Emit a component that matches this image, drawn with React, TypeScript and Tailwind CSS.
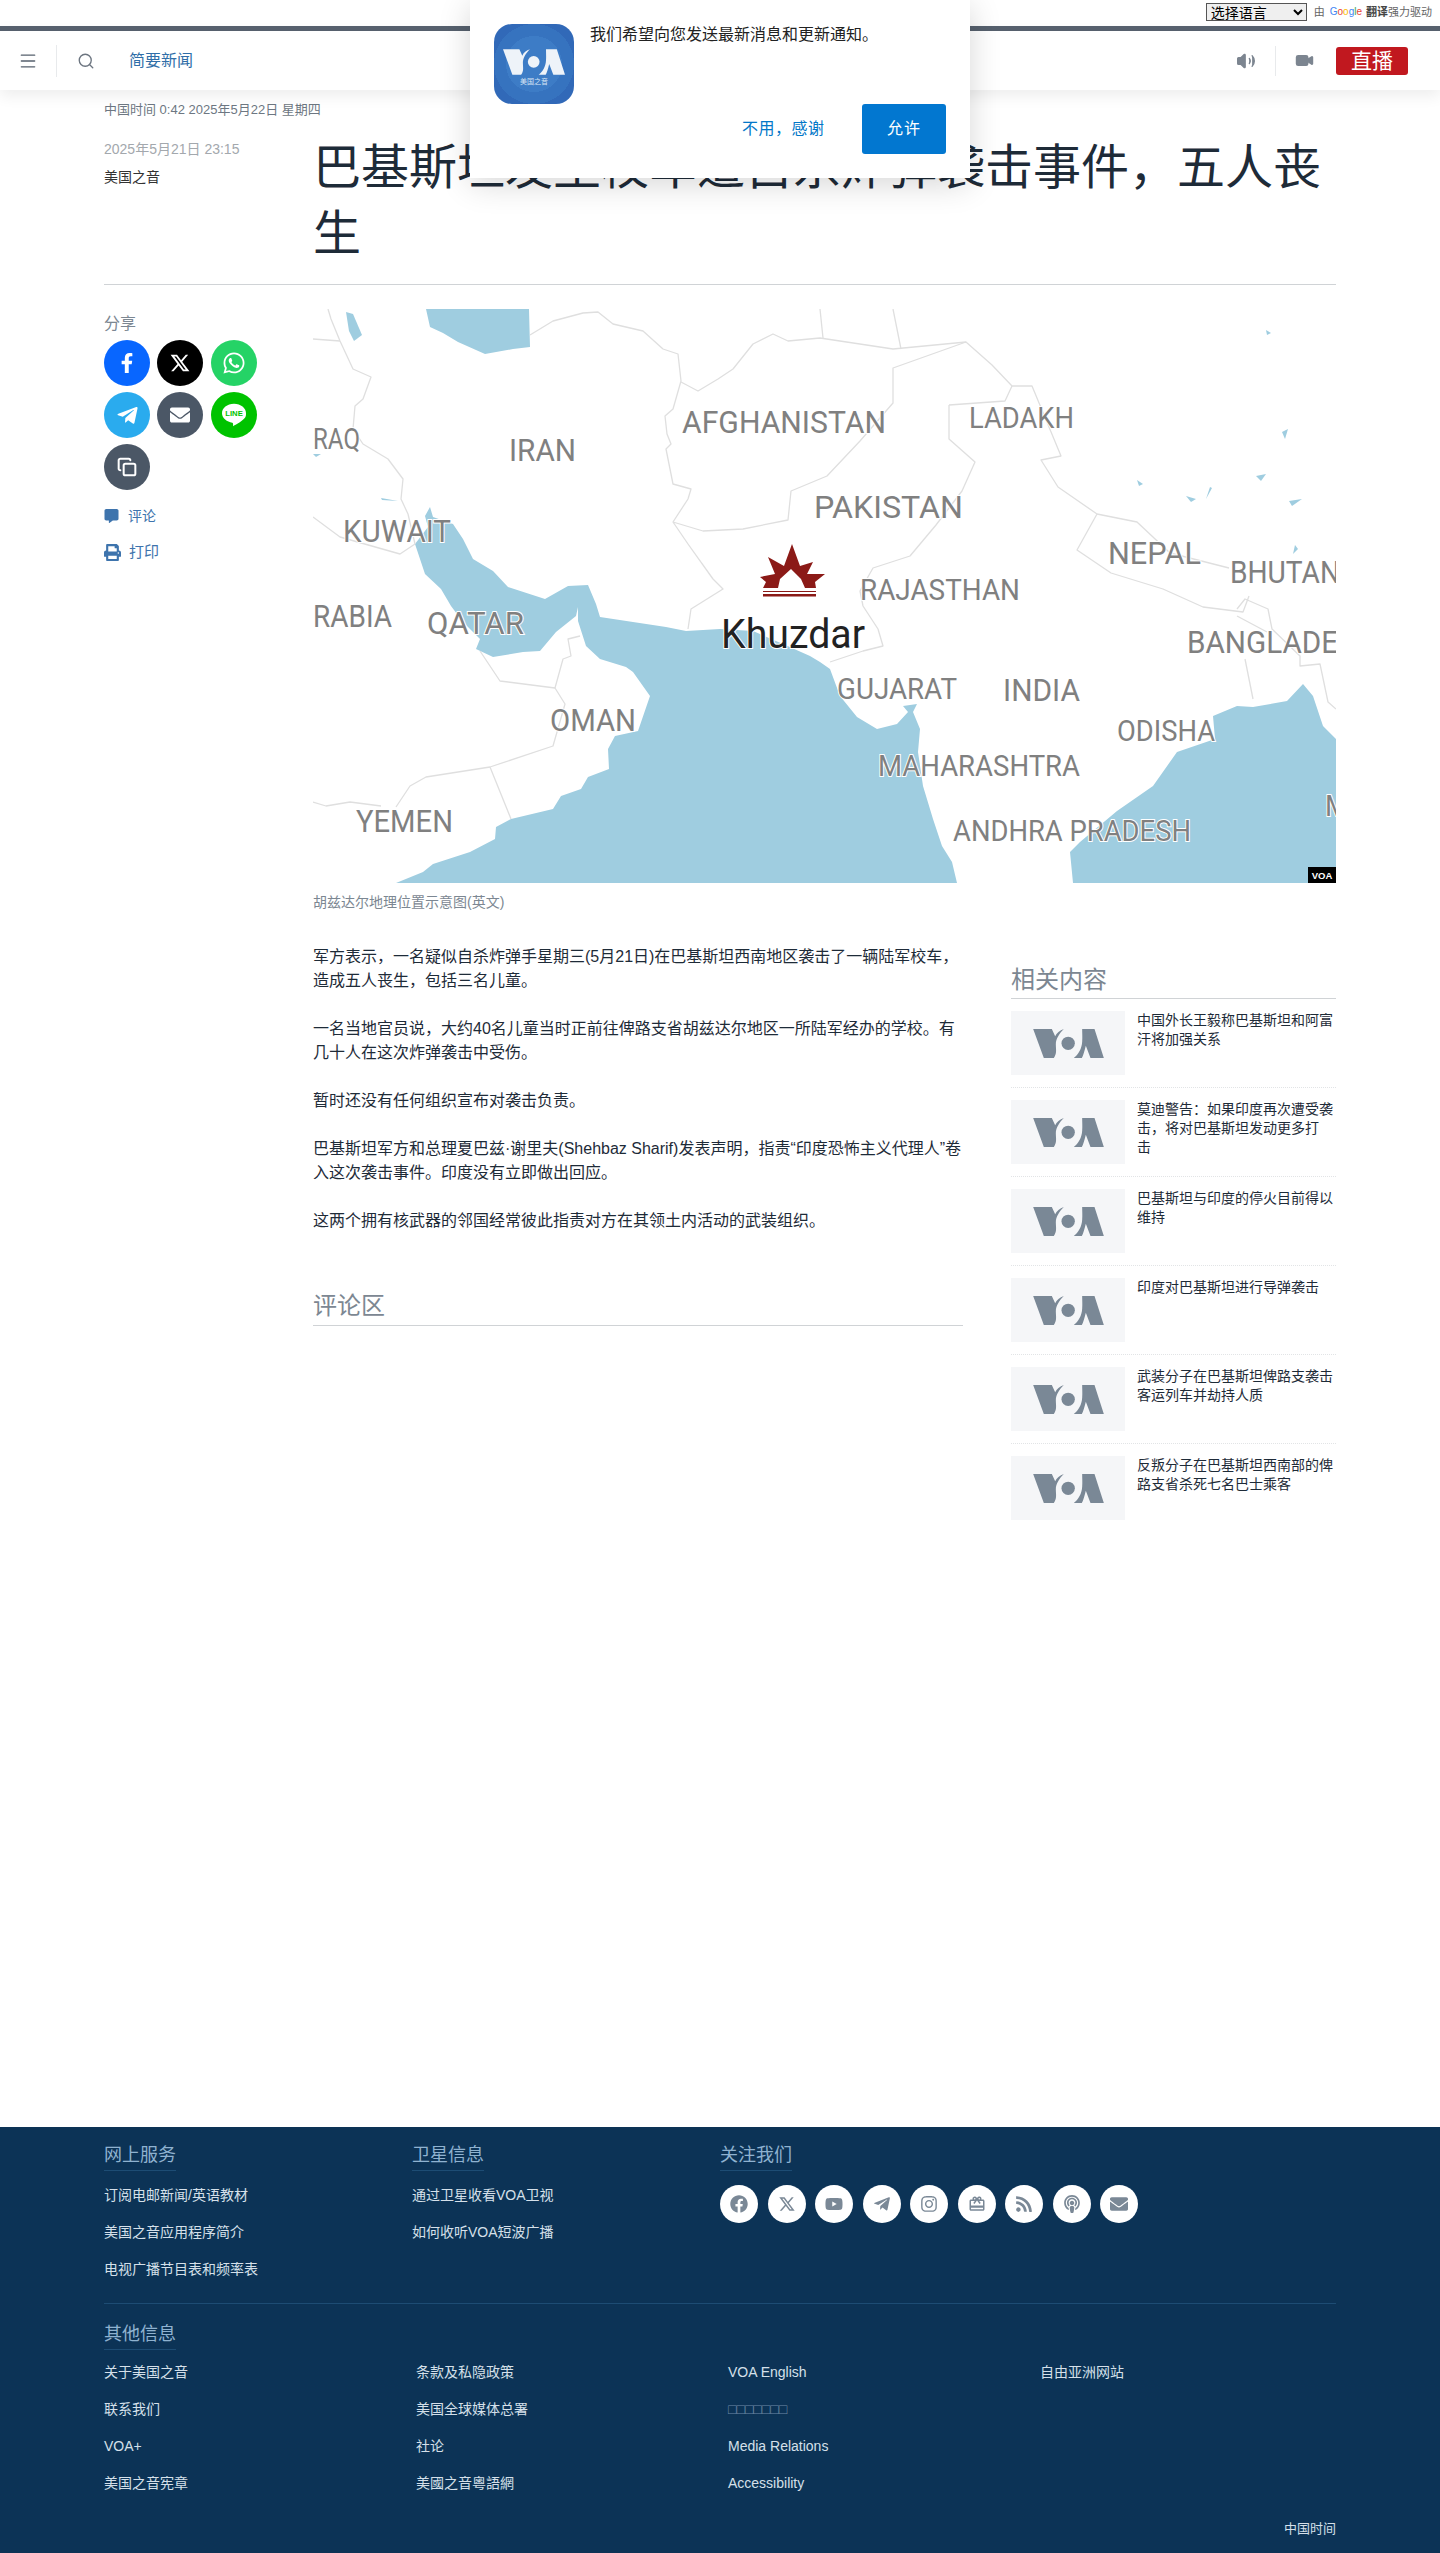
import { Menu, Search, Volume2, Video, Copy } from 'lucide-react'
import { FaFacebook, FaFacebookF, FaWhatsapp, FaTelegramPlane, FaEnvelope, FaYoutube, FaInstagram, FaRss, FaPodcast, FaCommentAlt, FaPrint } from 'react-icons/fa'
import { RiTwitterXLine } from 'react-icons/ri'
import { MdOutlineCardGiftcard } from 'react-icons/md'

const related = [
  '中国外长王毅称巴基斯坦和阿富汗将加强关系',
  '莫迪警告：如果印度再次遭受袭击，将对巴基斯坦发动更多打\n击',
  '巴基斯坦与印度的停火目前得以维持',
  '印度对巴基斯坦进行导弹袭击',
  '武装分子在巴基斯坦俾路支袭击客运列车并劫持人质',
  '反叛分子在巴基斯坦西南部的俾路支省杀死七名巴士乘客',
]

const paragraphs = [
  '军方表示，一名疑似自杀炸弹手星期三(5月21日)在巴基斯坦西南地区袭击了一辆陆军校车，造成五人丧生，包括三名儿童。',
  '一名当地官员说，大约40名儿童当时正前往俾路支省胡兹达尔地区一所陆军经办的学校。有几十人在这次炸弹袭击中受伤。',
  '暂时还没有任何组织宣布对袭击负责。',
  '巴基斯坦军方和总理夏巴兹·谢里夫(Shehbaz Sharif)发表声明，指责“印度恐怖主义代理人”卷入这次袭击事件。印度没有立即做出回应。',
  '这两个拥有核武器的邻国经常彼此指责对方在其领土内活动的武装组织。',
]

const mapLabels = [
  { t: 'AFGHANISTAN', x: 369, y: 124, w: 204, fs: 31 },
  { t: 'LADAKH', x: 656, y: 119, w: 105, fs: 30 },
  { t: 'IRAN', x: 196, y: 152, w: 67, fs: 31 },
  { t: 'RAQ', x: 0, y: 140, w: 47, fs: 30 },
  { t: 'PAKISTAN', x: 501, y: 209, w: 149, fs: 31 },
  { t: 'KUWAIT', x: 30, y: 233, w: 108, fs: 31 },
  { t: 'NEPAL', x: 795, y: 255, w: 93, fs: 31 },
  { t: 'BHUTAN', x: 917, y: 274, w: 110, fs: 31 },
  { t: 'RAJASTHAN', x: 547, y: 291, w: 160, fs: 29 },
  { t: 'RABIA', x: 0, y: 318, w: 79, fs: 31 },
  { t: 'QATAR', x: 114, y: 325, w: 97, fs: 31 },
  { t: 'BANGLADESH', x: 874, y: 344, w: 190, fs: 31 },
  { t: 'GUJARAT', x: 524, y: 390, w: 120, fs: 29 },
  { t: 'INDIA', x: 690, y: 392, w: 77, fs: 31 },
  { t: 'OMAN', x: 237, y: 422, w: 86, fs: 31 },
  { t: 'ODISHA', x: 804, y: 432, w: 98, fs: 29 },
  { t: 'MAHARASHTRA', x: 565, y: 467, w: 202, fs: 29 },
  { t: 'YEMEN', x: 43, y: 523, w: 97, fs: 31 },
  { t: 'ANDHRA PRADESH', x: 640, y: 532, w: 238, fs: 29 },
  { t: 'M', x: 1012, y: 507, w: 24, fs: 30 },
]

const seaAreas = [
  // Caspian
  '113,0 216,0 217,38 200,40 172,45 145,33 130,24 117,18',
  // Persian Gulf and Arabian Sea
  '117,198 120,208 140,215 150,230 160,250 180,262 195,278 232,290 255,277 275,276 283,295 287,308 320,313 353,318 373,322 407,320 440,322 470,335 497,347 507,353 517,360 527,387 544,408 564,420 584,415 595,403 590,397 604,395 600,403 607,420 605,443 610,477 620,510 629,537 639,553 644,574 83,574 110,563 120,555 157,543 182,530 183,518 198,510 240,500 248,487 268,480 275,468 296,460 295,440 302,427 325,422 337,387 320,363 313,358 287,350 273,337 265,312 265,298 263,307 243,323 227,342 210,343 180,348 163,340 167,330 150,313 138,297 128,280 112,265 102,235 115,218 112,207',
  // Bay of Bengal
  '760,574 757,543 767,533 804,502 840,477 864,443 902,430 900,407 924,397 940,398 974,392 990,375 1000,387 1010,417 1023,430 1023,574',
  // lakes
  '33,3 40,5 49,26 41,32 36,22',
  '68,189 85,192 69,191',
  '0,145 8,145 3,148',
  '943,167 953,165 948,172',
  '873,187 883,190 878,193',
  '976,192 989,190 979,197',
  '897,178 899,179 893,190',
  '824,171 830,175 826,177',
  '969,123 975,120 972,130',
  '982,236 985,240 980,245',
  '953,21 958,24 954,26',
]

const borders = [
  '217,26 240,12 270,4 285,3 300,15 330,22 350,40 365,45 368,72 360,100 352,107 354,125 358,135 353,140 360,175 378,180 375,190 360,213 375,235 400,270 410,280 378,300 375,320',
  '360,213 390,222 430,220 475,211 478,182 514,167 547,132 580,94 580,59 653,33',
  '368,73 385,82 405,70 420,60 440,35 460,25 475,32 507,29 580,40 653,33 679,56 699,77 719,77 748,147 728,151 745,178 784,205',
  '507,0 510,29',
  '580,0 588,40',
  '636,96 692,92 699,77',
  '636,96 636,130 662,153 649,182 623,216 597,247 560,259 547,282 550,297 565,320 570,337 550,342 517,353',
  '784,205 764,241 798,264 850,280 890,298 930,303 936,287',
  '784,205 824,213 857,244 916,259',
  '924,300 932,290 955,300 959,320 987,347 987,357 1007,355 1015,393 1023,400',
  '924,307 954,323',
  '932,350 940,390',
  '15,0 18,10 27,32 40,60 58,68 50,90 42,97 40,120 50,135 75,150 90,170 88,190 95,205 102,235',
  '0,30 27,32',
  '0,208 27,228 87,245 102,235',
  '167,342 187,372 242,379 250,350 258,347 255,330 267,327',
  '242,379 252,395 240,437 177,458 113,468 97,477 83,498',
  '0,493 13,497 37,493 68,497',
  '177,458 198,510',
]

const serviceLinks = [
  ['订阅电邮新闻/英语教材', '美国之音应用程序简介', '电视广播节目表和频率表'],
  ['通过卫星收看VOA卫视', '如何收听VOA短波广播'],
]

const otherLinks = [
  ['关于美国之音', '联系我们', 'VOA+', '美国之音宪章'],
  ['条款及私隐政策', '美国全球媒体总署', '社论', '美國之音粵語網'],
  ['VOA English', '□□□□□□□', 'Media Relations', 'Accessibility'],
  ['自由亚洲网站'],
]

const footerSocial = [FaFacebook, RiTwitterXLine, FaYoutube, FaTelegramPlane, FaInstagram, MdOutlineCardGiftcard, FaRss, FaPodcast, FaEnvelope]

function VoaLogo({ className, fill = '#7a8896' }: { className?: string; fill?: string }) {
  return (
    <svg viewBox="0 0 212 87" className={className} fill={fill}>
      <path d="M0 0H56L66 22C70 12 80 4 92 0C78 14 68 30 68 46C68 60 72 74 62 87H32Z" />
      <circle cx="105" cy="43" r="20" />
      <path d="M147 0H184L212 87H172L158 50C154 66 150 80 146 87H122C136 76 146 58 147 38C148 24 147 12 147 0Z" />
    </svg>
  )
}

function MapImage() {
  return (
    <svg viewBox="0 0 1023 574" className="block h-[574px] w-[1023px] bg-white">
      {seaAreas.map((p) => (
        <polygon key={p} points={p} fill="#9fcde0" />
      ))}
      {borders.map((b) => (
        <polyline key={b} points={b} fill="none" stroke="#dfdfdf" strokeWidth="1.3" strokeLinejoin="round" />
      ))}
      <g fontFamily="Roboto, sans-serif" fill="#808080">
        {mapLabels.map((l) => (
          <text key={l.t} x={l.x} y={l.y} fontSize={l.fs} textLength={l.w} lengthAdjust="spacingAndGlyphs" stroke="#fff" strokeWidth="2" paintOrder="stroke">
            {l.t}
          </text>
        ))}
        <text x="408" y="339" fontSize="41" fill="#222" textLength="144" lengthAdjust="spacingAndGlyphs" stroke="#fff" strokeWidth="2" paintOrder="stroke">
          Khuzdar
        </text>
      </g>
      <g fill="#8b1a17">
        <polygon points="479,235 487,257 500,253 494,265 512,265 502,273 503,279 492,279 488,270 478,260 467,270 465,279 450,279 453,273 447,268 462,265 455,248 471,257" />
        <rect x="450" y="282" width="53" height="1" />
        <rect x="450" y="285" width="53" height="2.5" />
      </g>
      <rect x="995" y="558" width="28" height="16" fill="#000" />
      <text x="1009" y="570" fontSize="9.5" fontWeight="700" fill="#fff" textAnchor="middle" fontFamily="Liberation Sans, sans-serif">
        VOA
      </text>
    </svg>
  )
}

function FooterHeading({ children }: { children: string }) {
  return (
    <h3 className="mb-[14px] w-fit border-b border-[#1d4c74] pb-[1px] text-[18px] leading-[27px] text-[#8fb2d0]">
      {children}
    </h3>
  )
}

export default function App() {
  return (
    <div className="relative min-h-[2553px] overflow-hidden bg-white font-['Liberation_Sans','Noto_Sans_CJK_SC',sans-serif] text-[#1e2b38]">
      {/* translate bar */}
      <div className="flex h-[26px] items-start justify-end gap-[7px] pr-[8px] pt-[3px] text-[11px] leading-[18px] text-[#666]">
        <select className="h-[18px] w-[101px] border border-[#555] bg-[#efefef] text-[14px] leading-none text-black">
          <option>选择语言</option>
        </select>
        <span className="flex items-center">
          <span>由</span>
          <span className="ml-[5px] text-[10px] leading-[18px]">
            <span className="text-[#4285f4]">G</span>
            <span className="text-[#ea4335]">o</span>
            <span className="text-[#fbbc05]">o</span>
            <span className="text-[#4285f4]">g</span>
            <span className="text-[#34a853]">l</span>
            <span className="text-[#ea4335]">e</span>
          </span>
          <span className="ml-[4px] font-bold text-[#444]">翻译</span>
          <span>强力驱动</span>
        </span>
      </div>

      {/* header */}
      <header className="relative flex h-[64px] items-center border-t-[5px] border-[#56606d] bg-white shadow-[0_6px_14px_rgba(0,0,0,0.07)]">
        <Menu className="ml-[18px] h-[20px] w-[20px] text-[#56606d]" strokeWidth={1.6} />
        <div className="ml-[18px] h-[32px] w-px bg-[#e8eaec]" />
        <Search className="ml-[20px] h-[18px] w-[18px] text-[#6c7580]" strokeWidth={1.8} />
        <span className="ml-[34px] text-[16px] text-[#2f6ea8]">简要新闻</span>
        <div className="ml-auto flex items-center">
          <Volume2 className="h-[20px] w-[20px] fill-[#7c8590] text-[#7c8590]" strokeWidth={1.6} />
          <div className="mx-[19px] h-[30px] w-px bg-[#e8eaec]" />
          <Video className="h-[19px] w-[19px] fill-[#7c8590] text-[#7c8590]" />
          <span className="ml-[22px] mr-[32px] flex h-[28px] w-[72px] items-center justify-center rounded-[3px] bg-[#c1181f] text-[21px] text-white">
            直播
          </span>
        </div>
      </header>

      {/* notification prompt */}
      <div className="absolute left-[470px] top-0 z-10 h-[178px] w-[500px] bg-white shadow-[0_6px_30px_rgba(0,0,0,0.16)]">
        <div className="absolute left-[24px] top-[24px] flex h-[80px] w-[80px] flex-col items-center justify-center rounded-[18px] bg-[radial-gradient(circle_at_center,#3d7cc6_0,#3d7cc6_28px,#3673bf_28px,#3673bf_40px,#3169b8_40px)]">
          <VoaLogo className="mt-[6px] h-[26px] w-[62px]" fill="#eef3f9" />
          <span className="mt-[3px] text-[7px] leading-none text-[#d8e5f5]">美国之音</span>
        </div>
        <p className="absolute left-[120px] top-[24px] text-[16px] leading-[22px] text-[#222]">我们希望向您发送最新消息和更新通知。</p>
        <span className="absolute left-[272px] top-[118px] text-[16px] leading-[22px] tracking-[0.5px] text-[#0277c8]">不用，感谢</span>
        <span className="absolute left-[392px] top-[104px] flex h-[50px] w-[84px] items-center justify-center rounded-[3px] bg-[#0277d0] text-[16px] tracking-[1px] text-white">
          允许
        </span>
      </div>

      <main className="ml-[104px] w-[1232px]">
        <p className="pt-[10px] text-[13px] leading-[20px] text-[#6d7782]">中国时间 0:42 2025年5月22日 星期四</p>

        <div className="mt-[15px] flex border-b border-[#d0d3d6] pb-[17px]">
          <div className="w-[209px] shrink-0 pt-[4px]">
            <p className="text-[14px] leading-[20px] text-[#a3a8ad]">2025年5月21日 23:15</p>
            <p className="mt-[8px] text-[14px] leading-[20px] text-[#333]">美国之音</p>
          </div>
          <h1 className="w-[1022px] text-[48px] font-normal leading-[66px] text-[#1e2b38]">巴基斯坦发生校车遭自杀炸弹袭击事件，五人丧生</h1>
        </div>

        <div className="mt-[24px] flex">
          <aside className="w-[209px] shrink-0">
            <p className="mt-[4px] text-[16px] leading-[22px] text-[#7c8792]">分享</p>
            <div className="mt-[5px] grid w-[153px] grid-cols-3 gap-x-[7px] gap-y-[6px]">
              <span className="flex h-[46px] w-[46px] items-center justify-center rounded-full bg-[#0866ff] text-[20px] text-white"><FaFacebookF /></span>
              <span className="flex h-[46px] w-[46px] items-center justify-center rounded-full bg-black text-[22px] text-white"><RiTwitterXLine /></span>
              <span className="flex h-[46px] w-[46px] items-center justify-center rounded-full bg-[#25d366] text-[24px] text-white"><FaWhatsapp /></span>
              <span className="flex h-[46px] w-[46px] items-center justify-center rounded-full bg-[#2aabee] text-[23px] text-white"><FaTelegramPlane /></span>
              <span className="flex h-[46px] w-[46px] items-center justify-center rounded-full bg-[#4b5766] text-[20px] text-white"><FaEnvelope /></span>
              <span className="flex h-[46px] w-[46px] items-center justify-center rounded-full bg-[#00c300]">
                <svg viewBox="0 0 30 28" className="h-[24px] w-[26px]">
                  <path d="M15 1C7 1 1 6 1 12C1 18 7 22 13 23C14 23 14 25 14 27C18 25 25 21 28 17C29 15 29 14 29 12C29 6 23 1 15 1Z" fill="#fff" />
                  <text x="15" y="15.5" fontSize="9" fontWeight="700" fill="#00c300" textAnchor="middle" fontFamily="Liberation Sans, sans-serif">
                    LINE
                  </text>
                </svg>
              </span>
              <span className="flex h-[46px] w-[46px] items-center justify-center rounded-full bg-[#4b5766] text-white"><Copy className="h-[20px] w-[20px]" strokeWidth={2.4} /></span>
            </div>
            <div className="mt-[15px] flex h-[22px] items-center text-[14px] text-[#3e74ad]">
              <FaCommentAlt className="h-[14px] w-[15px]" />
              <span className="ml-[9px]">评论</span>
            </div>
            <div className="mt-[14px] flex h-[22px] items-center text-[15px] text-[#3e74ad]">
              <FaPrint className="h-[17px] w-[17px]" />
              <span className="ml-[8px]">打印</span>
            </div>
          </aside>

          <div className="w-[1023px]">
            <MapImage />
            <p className="mt-[9px] text-[14px] leading-[20px] text-[#7c8792]">胡兹达尔地理位置示意图(英文)</p>

            <div className="mt-[33px] flex justify-between">
              <div className="w-[650px]">
                {paragraphs.map((p) => (
                  <p key={p} className="mb-[24px] text-[16px] leading-[24px] text-[#1e2b38]">
                    {p}
                  </p>
                ))}
                <h2 className="mt-[56px] border-b border-[#d0d3d6] pb-[2px] text-[24px] leading-[34px] text-[#7c8792]">评论区</h2>
              </div>

              <div className="w-[325px] pt-[17px]">
                <h2 className="border-b border-[#d0d3d6] text-[24px] leading-[36px] text-[#7c8792]">相关内容</h2>
                <ul>
                  {related.map((t) => (
                    <li key={t} className="flex h-[89px] border-b border-dotted border-[#e2e4e6] pt-[12px] last:border-b-0">
                      <span className="flex h-[64px] w-[114px] shrink-0 items-center justify-center bg-[#f5f6f8]">
                        <VoaLogo className="h-[29px] w-[71px]" />
                      </span>
                      <p className="ml-[12px] whitespace-pre-line text-[14px] leading-[19px] text-[#1e2b38]">{t}</p>
                    </li>
                  ))}
                </ul>
              </div>
            </div>
          </div>
        </div>
      </main>

      {/* footer */}
      <footer className="absolute bottom-0 left-0 right-0 h-[426px] bg-[#0c3356] pl-[104px] pr-[104px] pt-[15px] text-[14px] text-[#d5e0ea]">
        <div className="flex h-[162px] border-b border-[#1d4c74]">
          {serviceLinks.map((col, i) => (
            <div key={i} className="w-[308px]">
              <FooterHeading>{i === 0 ? '网上服务' : '卫星信息'}</FooterHeading>
              {col.map((l) => (
                <p key={l} className="h-[37px] leading-[20px]">{l}</p>
              ))}
            </div>
          ))}
          <div>
            <FooterHeading>关注我们</FooterHeading>
            <div className="flex gap-[9.5px]">
              {footerSocial.map((Icon, i) => (
                <span key={i} className="flex h-[38px] w-[38px] items-center justify-center rounded-full bg-white text-[18px] text-[#7a8896]">
                  <Icon />
                </span>
              ))}
            </div>
          </div>
        </div>
        <div className="pt-[17px]">
          <FooterHeading>其他信息</FooterHeading>
          <div className="-mt-[2px] grid grid-cols-[repeat(4,312px)]">
            {otherLinks.map((col, i) => (
              <div key={i}>
                {col.map((l) => (
                  <p key={l} className={l.startsWith('□') ? 'h-[37px] leading-[20px] text-[#6f8ba6]' : 'h-[37px] leading-[20px]'}>{l}</p>
                ))}
              </div>
            ))}
          </div>
        </div>
        <p className="absolute bottom-[14px] right-[104px] text-[13px] leading-[20px]">中国时间</p>
      </footer>
    </div>
  )
}
